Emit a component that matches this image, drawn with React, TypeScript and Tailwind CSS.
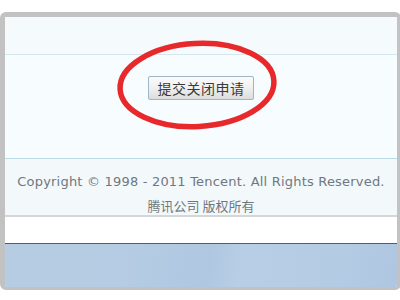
import React from "react";

export default function App() {
  return (
    <div className="relative w-[400px] h-[300px] bg-white overflow-hidden">
      <div className="mt-[12px] w-[401px] h-[278px] border-t-[5px] border-l-[5px] border-r-[4px] border-b-[3px] border-[#c2c2c2] rounded-[6px] flex flex-col overflow-hidden">
        <div className="h-[38px] bg-[#f5fbfd] border-b border-[#d6e8ef]" />
        <div className="h-[104px] bg-[#f7fcfe] border-b border-[#bcdbe8] flex justify-center">
          <button className="mt-[21px] w-[106px] h-[24px] rounded-[2px] border border-[#9fb5c8] bg-gradient-to-b from-[#fbfbfb] via-[#f0f0f0] to-[#dcdcdc] text-[14px] leading-[22px] text-[#3a3a3a] font-['Noto_Sans_CJK_SC',sans-serif] tracking-[0.5px]">
            提交关闭申请
          </button>
        </div>
        <div className="h-[58px] bg-[#f3f8fb] border-b-2 border-[#d4d6d8] flex flex-col items-center text-[#6e7880]">
          <div className="mt-[14px] text-[13px] leading-[18px] font-['DejaVu_Sans',sans-serif] tracking-[0.2px]">
            Copyright © 1998 - 2011 Tencent. All Rights Reserved.
          </div>
          <div className="mt-[7px] text-[13px] leading-[16px] font-['Noto_Sans_CJK_SC',sans-serif]">
            腾讯公司 版权所有
          </div>
        </div>
        <div className="h-[27px] bg-white border-b border-[#545c68]" />
        <div className="flex-1 bg-[linear-gradient(100deg,#b6cce3_0%,#b5cce4_30%,#afc7e1_52%,#b8cee6_60%,#b4cbe4_85%,#aec6e0_100%)]" />
      </div>
      <svg className="absolute left-0 top-0 pointer-events-none" width="400" height="300">
        <ellipse cx="197" cy="85" rx="77" ry="41.5" fill="none" stroke="#e8292c" strokeWidth="5.5" transform="rotate(-3 197 85)" />
      </svg>
    </div>
  );
}
